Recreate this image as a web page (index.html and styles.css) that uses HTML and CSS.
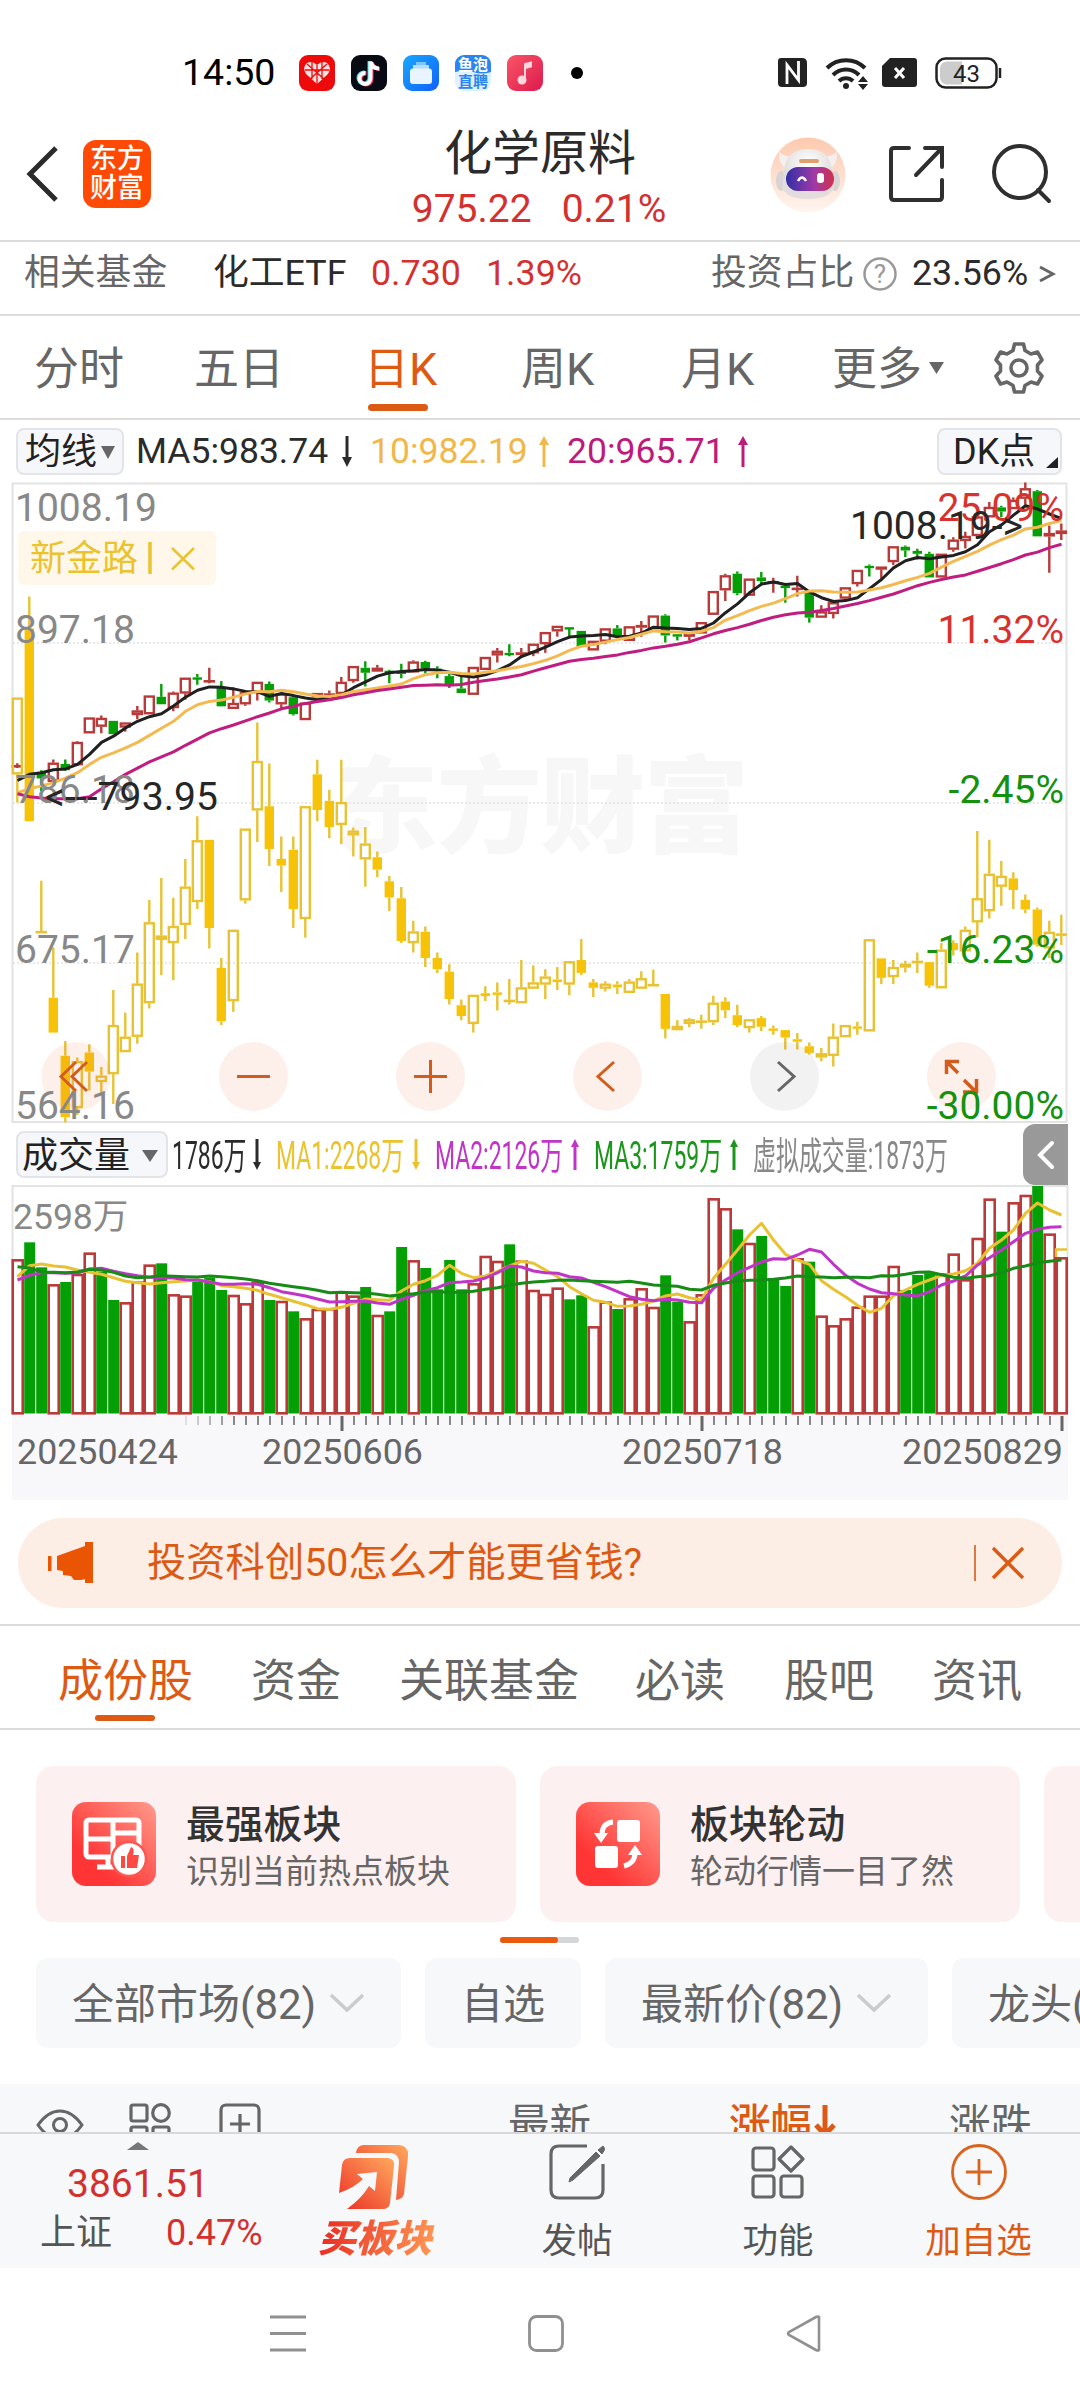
FILE: index.html
```html
<!DOCTYPE html>
<html lang="zh-CN">
<head>
<meta charset="utf-8">
<title>化学原料</title>
<link rel="stylesheet" href="styles.css">
</head>
<body>
<div class="status">
  <span class="clock">14:50</span>
  <div class="apps">
    <svg viewBox="0 0 36 36"><rect width="36" height="36" rx="9" fill="#ee0a0a"/><path d="M18 29 L7 19 Q3 12 8 8 Q13 5 18 10 Q23 5 28 8 Q33 12 29 19Z" fill="#ffe3e0"/><path d="M18 10V29M8 9L25 24M28 9L11 24M6 15H30M13 7V24M23 7V24" stroke="#ee0a0a" stroke-width="1.3"/></svg>
    <svg viewBox="0 0 36 36"><rect width="36" height="36" rx="9" fill="#090b14"/><g fill="none" stroke-width="4"><path d="M18.5 6V23a5.500 5.500 0 1 1-5-5.500M19 7q1.500 6 8 6" stroke="#25e6e0"/><path d="M20.500 7V24a5.500 5.500 0 1 1-5-5.500M21 8q1.500 6 8 6" stroke="#f7305a"/><path d="M19.500 6.500V23.500a5.500 5.500 0 1 1-5-5.500M20 7.500q1.500 6 8 6" stroke="#fff"/></g></svg>
    <svg viewBox="0 0 36 36"><defs><linearGradient id="blue" x2="1" y2="1"><stop stop-color="#18a8ff"/><stop offset="1" stop-color="#1260fa"/></linearGradient></defs><rect width="36" height="36" rx="9" fill="url(#blue)"/><path d="M13 7h10v3H13z" fill="#7fc6ff"/><path d="M10 10h16v4H10z" fill="#b5dcff"/><rect x="7" y="13.500" width="22" height="15.500" rx="3" fill="#e8f4ff"/></svg>
    <svg viewBox="0 0 36 36"><rect width="36" height="36" rx="9" fill="#dff0ff"/><path d="M0 17V9a9 9 0 0 1 9-9h18a9 9 0 0 1 9 9v8q-9 3-18 0-9-2-18 0z" fill="#2a85f0"/><text x="18" y="15" class="app-text" fill="#fff">鱼泡</text><text x="18" y="32" class="app-text" fill="#2a85f0">直聘</text></svg>
    <svg viewBox="0 0 36 36"><defs><linearGradient id="pink" x2="1" y2="1"><stop stop-color="#fa5568"/><stop offset="1" stop-color="#dc1a4e"/></linearGradient></defs><rect width="36" height="36" rx="9" fill="url(#pink)"/><path d="M18 25V9l6-1.500v4L18 13" fill="#ffd6dc" stroke="#ffd6dc" stroke-width="2"/><circle cx="15" cy="25" r="4.500" fill="#ffd6dc"/></svg>
  </div>
  <i class="dot"></i>
  <div class="signals">
    <svg width="32" height="32" viewBox="0 0 32 32"><path d="M4 1h21q5 0 5 5v20q0 4-4 4H5q-4 0-4-4V4q0-3 3-3z" fill="#222"/><path d="M10 27V8L21.500 23V4" fill="none" stroke="#fff" stroke-width="2.800"/></svg>
    <svg width="46" height="36" viewBox="0 0 46 36"><g fill="none" stroke="#222" stroke-width="4"><path d="M2 13a27 27 0 0 1 38 0M8 20a18 18 0 0 1 26 0M14 26a10 10 0 0 1 14 0"/></g><circle cx="21" cy="31" r="3" fill="#222"/><path d="M33 27l5-6 5 6zM33 29l5 6 5-6z" fill="#222"/></svg>
    <svg width="36" height="32" viewBox="0 0 36 32"><path d="M8 1h24q3 0 3 3v23q0 3-3 3H3q-3 0-3-3V9z" fill="#222"/><path d="M13 11l9 10M22 11l-9 10" stroke="#fff" stroke-width="3"/></svg>
    <svg width="68" height="32" viewBox="0 0 68 32"><rect x="1.500" y="1.500" width="60" height="29" rx="9" fill="#fff" stroke="#222" stroke-width="2.500"/><path d="M12 4.500h15v23H12a7 7 0 0 1-7-7v-9a7 7 0 0 1 7-7z" fill="#ccc"/><path d="M65 11v10" stroke="#222" stroke-width="2.500"/><text x="31.500" y="24.500" class="battery">43</text></svg>
  </div>
</div>

<header class="header">
  <svg class="back" viewBox="0 0 34 58"><path d="M30 3L4 29L30 55" fill="none" stroke="#2b2b2b" stroke-width="5"/></svg>
  <div class="logo"><span>东方</span><span>财富</span></div>
  <div class="title"><h1>化学原料</h1><p><span>975.22</span><span>0.21%</span></p></div>
  <svg class="robot" viewBox="0 0 76 76"><defs><linearGradient id="halo" x2="0" y2="1"><stop stop-color="#fdc9ae"/><stop offset="1" stop-color="#fff5f0"/></linearGradient><linearGradient id="visor"><stop stop-color="#322fa8"/><stop offset=".6" stop-color="#a13aa5"/><stop offset="1" stop-color="#d0304a"/></linearGradient><radialGradient id="shell" cy=".3"><stop stop-color="#fff"/><stop offset="1" stop-color="#e2dcdc"/></radialGradient></defs><circle cx="38" cy="38" r="37.500" fill="url(#halo)"/><path d="M9 15q8 6 16 4l-8 14q-9-6-8-18zM67 15q-8 6-16 4l8 14q9-6 8-18z" fill="#f5efee"/><ellipse cx="11" cy="44" rx="5" ry="10" fill="#d8d3d4"/><ellipse cx="65" cy="44" rx="5" ry="10" fill="#d8d3d4"/><path d="M38 12q21 0 24 20l2 18q-4 12-26 12T12 50l2-18q3-20 24-20z" fill="url(#shell)"/><rect x="29" y="22" width="20" height="4" rx="2" fill="#dfa06c"/><rect x="16" y="30" width="48" height="24" rx="12" fill="url(#visor)"/><path d="M28 44q4-7 8 0" fill="none" stroke="#fff" stroke-width="2.500"/><rect x="47" y="36" width="7" height="10" rx="3" fill="#fff"/></svg>
  <svg class="share" viewBox="0 0 58 60"><path d="M21 4H6Q3 4 3 7V53Q3 56 6 56H51Q54 56 54 53V36M37 4H54V23M53 5L28 31" fill="none" stroke="#2f2f2f" stroke-width="4" stroke-linecap="round"/></svg>
  <svg class="search" viewBox="0 0 62 62"><circle cx="29" cy="29" r="26" fill="none" stroke="#2f2f2f" stroke-width="4"/><path d="M47 47L58 58" stroke="#2f2f2f" stroke-width="4" stroke-linecap="round"/></svg>
</header>

<div class="fund">
  <span class="muted">相关基金</span><span>化工ETF</span><span class="red">0.730</span><span class="red">1.39%</span><span class="muted">投资占比</span>
  <svg width="36" height="36" viewBox="0 0 36 36"><circle cx="18" cy="18" r="15.500" fill="none" stroke="#999" stroke-width="2.500"/><text x="18" y="27" class="help">?</text></svg>
  <span>23.56%</span><svg width="18" height="20" viewBox="0 0 18 20"><path d="M2 3L15 10L2 17" fill="none" stroke="#666" stroke-width="3"/></svg>
</div>

<nav class="periods">
  <span>分时</span><span>五日</span><span class="active">日K</span><span>周K</span><span>月K</span><span>更多</span>
  <svg width="18" height="14" viewBox="0 0 18 14"><path d="M1 1H16L8.500 13Z" fill="#666"/></svg>
  <svg class="gear" width="54" height="54" viewBox="0 0 54 54"><g fill="none" stroke="#666" stroke-width="3.600" stroke-linejoin="round"><path d="M22.500 3h9l1.500 6.500 6 3.500 6.500-2 4.500 8-4.500 5v6l4.500 5-4.500 8-6.500-2-6 3.500-1.500 6.500h-9L21 44.500 15 41l-6.500 2L4 35l4.500-5v-6L4 19l4.500-8 6.500 2 6-3.500z"/><circle cx="27" cy="27" r="8"/></g></svg>
</nav>

<div class="averages">
  <div class="pill">均线<svg width="14" height="13" viewBox="0 0 14 13"><path d="M0 0H14L7 13Z" fill="#666"/></svg></div>
  <span>MA5:983.74</span><svg class="down" viewBox="0 0 10 31"><path d="M5 0V26"/><path class="head" d="M0 21h10L5 31z"/></svg>
  <span class="amber">10:982.19</span><svg class="up amber" viewBox="0 0 10 31"><path d="M5 5V31"/><path class="head" d="M0 9h10L5 0z"/></svg>
  <span class="magenta">20:965.71</span><svg class="up magenta" viewBox="0 0 10 31"><path d="M5 5V31"/><path class="head" d="M0 9h10L5 0z"/></svg>
  <div class="pill dk">DK点<svg width="12" height="11" viewBox="0 0 12 11"><path d="M12 0V11H0Z" fill="#222"/></svg></div>
</div>

<div class="price">
  <svg class="plot" viewBox="0 482 1080 642">
    <text class="watermark" x="541" y="844" textLength="416">东方财富</text>
    <g class="grid"><path d="M13 643H1067M13 803H1067M13 963H1067"/></g>
    <rect class="frame" x="12.500" y="483.500" width="1054" height="638.500"/>
    <g id="candles"></g>
    <g class="controls">
      <circle cx="76" cy="1076.500" r="34.500"/><circle cx="253.500" cy="1076.500" r="34.500"/><circle cx="430.500" cy="1076.500" r="34.500"/><circle cx="607.500" cy="1076.500" r="34.500"/><circle class="off" cx="784.500" cy="1076.500" r="34.500"/><circle cx="961.500" cy="1076.500" r="34.500"/>
      <path d="M76 1062L61 1076.500L76 1091M87 1062L72 1076.500L87 1091M237 1076.500H270M414 1076.500H447M430.500 1060V1093M614 1062L598 1076.500L614 1091"/>
      <path class="off" d="M778 1062L794 1076.500L778 1091"/>
      <path class="expand" d="M959 1061.500H946.500V1074M947 1062L958 1073M964 1080L976 1092M963 1092H976.500V1079"/>
    </g>
    <g class="tag"><rect x="18" y="531" width="198" height="54" rx="6"/><text x="30" y="571">新金路</text><path d="M150 542V574" class="bar"/><path d="M172 548L194 569.500M194 548L172 569.500"/></g>
    <g class="scale"><text x="15" y="520.500">1008.19</text><text x="15" y="642.500">897.18</text><text x="15" y="803">786.18</text><text x="15" y="963">675.17</text><text x="15" y="1118.500">564.16</text></g>
    <g class="scale right"><text class="rise" x="1064" y="520.500">25.09%</text><text class="rise" x="1064" y="642.500">11.32%</text><text x="1064" y="803">-2.45%</text><text x="1064" y="963">-16.23%</text><text x="1064" y="1118.500">-30.00%</text></g>
    <g class="scale extreme"><text x="45" y="810" textLength="173">&lt;---793.95</text><text x="850" y="538.500">1008.19-&gt;</text></g>
  </svg>
</div>

<div class="volume-head">
  <div class="pill">成交量<svg width="16" height="12" viewBox="0 0 16 12"><path d="M0 0H16L8 12Z" fill="#666"/></svg></div>
  <span>1786万</span><svg class="down" viewBox="0 0 10 31"><path d="M5 0V26"/><path class="head" d="M1 23h8L5 31z"/></svg>
  <span class="gold">MA1:2268万</span><svg class="down gold" viewBox="0 0 10 31"><path d="M5 0V26"/><path class="head" d="M1 23h8L5 31z"/></svg>
  <span class="purple">MA2:2126万</span><svg class="up purple" viewBox="0 0 10 31"><path d="M5 5V31"/><path class="head" d="M1 8h8L5 0z"/></svg>
  <span class="green">MA3:1759万</span><svg class="up green" viewBox="0 0 10 31"><path d="M5 5V31"/><path class="head" d="M1 8h8L5 0z"/></svg>
  <span class="grey">虚拟成交量:1873万</span>
  <div class="drawer"><svg width="18" height="30" viewBox="0 0 18 30"><path d="M15 3L3 15L15 27" fill="none" stroke="#fff" stroke-width="4" stroke-linecap="round"/></svg></div>
</div>

<div class="volume">
  <svg class="plot" viewBox="0 1185 1080 315">
    <rect x="12" y="1414" width="1056" height="86" fill="#f8f8fa"/>
    <path class="frame" d="M12.500 1414V1186H1067.500V1414"/>
    <g id="bars"></g>
    <text class="vol-max" x="13" y="1228.500">2598万</text>
    <g class="dates"><text x="97.500" y="1463.500">20250424</text><text x="342.500" y="1463.500">20250606</text><text x="702.500" y="1463.500">20250718</text><text x="982.500" y="1463.500">20250829</text></g>
  </svg>
</div>

<div class="promo-wrap">
  <div class="promo">
    <svg width="46" height="42" viewBox="0 0 46 42"><path d="M0 14h3.500v15H0zM9 14L37 4V0h8v41H37V37L33 38 26 38 23 34 15 33V29L9 28z" fill="#ea5504"/></svg>
    <span>投资科创50怎么才能更省钱?</span>
    <i></i>
    <svg width="34" height="34" viewBox="0 0 34 34"><path d="M2 2L32 32M32 2L2 32" stroke="#dd5a14" stroke-width="3.500"/></svg>
  </div>
</div>

<nav class="sections"><span class="active">成份股</span><span>资金</span><span>关联基金</span><span>必读</span><span>股吧</span><span>资讯</span></nav>

<div class="cards">
  <div class="card">
    <svg viewBox="0 0 84 84"><defs><linearGradient id="red" x1="1" y1="0" x2="0" y2="1"><stop stop-color="#ff9b8c"/><stop offset=".75" stop-color="#ff3434"/></linearGradient></defs><rect width="84" height="84" rx="14" fill="url(#red)"/><rect x="14" y="18" width="53" height="37" rx="3" fill="none" stroke="#fff" stroke-width="5"/><path d="M41 17V56M14 37H41M41 31H68M25 65H42M36 56V66" fill="none" stroke="#fff" stroke-width="5"/><circle cx="57" cy="57" r="17" fill="#fff" stroke="#ff5550" stroke-width="2.500"/><path d="M49 54h4v12h-4zM55 54l4-9q4 1 2 8h6l-2 13H55z" fill="#ff4a44"/></svg>
    <div><b>最强板块</b><span>识别当前热点板块</span></div>
  </div>
  <div class="card">
    <svg viewBox="0 0 84 84"><rect width="84" height="84" rx="14" fill="url(#red)"/><rect x="41" y="18" width="23" height="22" rx="3" fill="#fff"/><rect x="19" y="44" width="23" height="22" rx="3" fill="#fff"/><path d="M37 20Q26 21 26 33M48 64Q59 61 59 51" fill="none" stroke="#fff" stroke-width="5"/><path d="M18 31H32L25 41ZM52 53H66L59 43Z" fill="#fff"/></svg>
    <div><b>板块轮动</b><span>轮动行情一目了然</span></div>
  </div>
  <div class="card"></div>
</div>
<div class="pager"><i></i></div>
<div class="chips">
  <div>全部市场(82)<svg viewBox="0 0 36 20"><path d="M2 2L18 17L34 2"/></svg></div>
  <div>自选</div>
  <div>最新价(82)<svg viewBox="0 0 36 20"><path d="M2 2L18 17L34 2"/></svg></div>
  <div>龙头(82)</div>
</div>

<div class="table-head">
  <svg width="48" height="34" viewBox="0 0 48 34"><g fill="none" stroke="#666" stroke-width="3"><path d="M2 17Q12 3 24 3T46 17Q36 31 24 31T2 17Z"/><circle cx="24" cy="17" r="6.500"/></g></svg>
  <svg width="42" height="42" viewBox="0 0 42 42"><g fill="none" stroke="#666" stroke-width="3.200"><rect x="2" y="2" width="16" height="16" rx="2"/><circle cx="32" cy="10" r="8.300"/><rect x="2" y="24" width="16" height="16" rx="2"/><rect x="24" y="24" width="16" height="16" rx="2"/></g></svg>
  <svg width="42" height="42" viewBox="0 0 42 42"><g fill="none" stroke="#666" stroke-width="3.200"><rect x="2" y="2" width="38" height="38" rx="5"/><path d="M21 11V31M11 21H31"/></g></svg>
  <span>最新<svg class="sort" viewBox="0 0 10 10"><path d="M10 0V10H0Z"/></svg></span><span class="sorted">涨幅<svg width="22" height="36" viewBox="0 0 22 36"><path d="M11 0V30M2 20L11 30L20 20" fill="none" stroke="#dd5a14" stroke-width="5"/></svg></span><span>涨跌<svg class="sort" viewBox="0 0 10 10"><path d="M10 0V10H0Z"/></svg></span>
</div>

<footer class="bottom">
  <div class="index"><svg width="22" height="8" viewBox="0 0 22 8"><path d="M0 8H22L11 0Z" fill="#777"/></svg><strong>3861.51</strong><p><span>上证</span><span class="red">0.47%</span></p></div>
  <div class="item buy"><svg width="74" height="68" viewBox="0 0 74 68"><defs><linearGradient id="fire" x1="1" y1="0" x2="0" y2="1"><stop stop-color="#ffa95e"/><stop offset="1" stop-color="#ec2f25"/></linearGradient></defs><path d="M18 9Q19 1 26 1H61Q71 2 70 12L66 50Q65 55 58 56L61 18Q61 11 54 9Z" fill="url(#fire)"/><path d="M12 14H50Q57 15 56 22L52 59Q51 65 45 65H9Q24 54 31 42L37 47 39 28 19 30 25 35Q16 44 1 49L4 21Q5 14 12 14Z" fill="url(#fire)"/></svg><span>买板块</span></div>
  <div class="item"><svg width="56" height="56" viewBox="0 0 56 56"><path d="M38 2H10Q2 2 2 10V46Q2 54 10 54H46Q54 54 54 46V20" fill="none" stroke="#666" stroke-width="3.200"/><path d="M49 6L54 2 56 5 53 10zM47 8L51 12 24 36 20 38 21 34z" fill="#666" stroke="#666"/></svg><span>发帖</span></div>
  <div class="item"><svg width="56" height="56" viewBox="0 0 56 56"><g fill="none" stroke="#666" stroke-width="3.200"><rect x="3" y="4" width="21" height="22" rx="3"/><path d="M41 3L53 15L41 27L29 15Z" stroke-linejoin="round"/><rect x="3" y="32" width="21" height="21" rx="3"/><rect x="31" y="32" width="21" height="21" rx="3"/></g></svg><span>功能</span></div>
  <div class="item add"><svg width="56" height="56" viewBox="0 0 56 56"><circle cx="28" cy="28" r="26.500" fill="none" stroke="#d9641f" stroke-width="2.800"/><path d="M28 15V41M15 28H41" stroke="#d9641f" stroke-width="2.800"/></svg><span>加自选</span></div>
</footer>

<div class="system-nav">
  <svg width="36" height="38" viewBox="0 0 36 38"><path d="M0 2H36M0 18.500H36M0 35H36" stroke="#909090" stroke-width="3"/></svg>
  <svg width="36" height="38" viewBox="0 0 36 38"><rect x="1.500" y="1.500" width="33" height="34" rx="7" fill="none" stroke="#909090" stroke-width="2.800"/></svg>
  <svg width="36" height="38" viewBox="0 0 36 38"><path d="M33 2V35Q32 36 30 35L3 20Q1 18.500 3 17L30 2Q32 1 33 2Z" fill="none" stroke="#909090" stroke-width="2.600"/></svg>
</div>
<script src="chart.js"></script>
</body>
</html>
```
FILE: styles.css
```css
* { box-sizing: border-box; margin: 0; padding: 0; }
body { width: 1080px; height: 2400px; overflow: hidden; background: #fff; color: #2b2b2b; font: 36px/1 Roboto, "Noto Sans CJK SC", sans-serif; white-space: nowrap; }
svg { display: block; flex: none; }
.red { color: #d3312f; }
.muted { color: #666; }

.status { display: flex; align-items: center; height: 100px; padding: 46px 0 0 182px; color: #000; }
.clock { width: 117px; font-size: 37.500px; }
.apps { display: flex; gap: 16px; }
.apps svg { width: 36px; height: 36px; }
.app-text { font-size: 15px; font-weight: 700; text-anchor: middle; }
.dot { width: 12px; height: 12px; margin-left: 28px; border-radius: 50%; background: #000; }
.signals { display: grid; grid-template-columns: 48px 57px 53px 68px; align-items: center; margin-left: 194px; }
.battery { font-size: 24px; text-anchor: middle; fill: #222; }

.header { display: grid; grid-template-columns: 57px 187px 540px 117px 102px 62px; align-items: start; height: 142px; padding-left: 26px; border-bottom: 2px solid #dcdcdc; }
.back { width: 34px; height: 58px; margin-top: 45px; }
.logo { display: flex; flex-direction: column; align-items: center; justify-content: center; width: 68px; height: 68px; margin-top: 40px; border-radius: 13px; background: #ff4a05; color: #fff; font-size: 27px; font-weight: 500; line-height: 29px; }
.title { width: 540px; text-align: center; padding-top: 29px; }
.title h1 { font-size: 48px; font-weight: 400; line-height: 50px; }
.title p { display: flex; justify-content: center; gap: 30px; margin-left: -2px; color: #d3312f; font-size: 39px; line-height: 60px; }
.robot { width: 76px; height: 76px; margin: 37px 0 0 -40px; }
.share { width: 58px; height: 60px; margin: 44px 0 0 -39px; }
.search { width: 62px; height: 62px; margin: 43px 0 0 -38px; }

.fund { display: grid; grid-template-columns: 189px 158px 115px 225px 151px 50px 126px 20px; align-items: center; height: 74px; padding: 0 0 9px 24px; border-bottom: 2px solid #dcdcdc; font-size: 35.800px; }
.help { font-size: 26px; text-anchor: middle; fill: #999; }

.periods { display: grid; grid-template-columns: 160px 170px 157px 160px 151px 96px 64px 54px; align-items: center; height: 104px; padding-left: 34px; border-bottom: 2px solid #dcdcdc; color: #666; font-size: 45px; }
.periods span { height: 104px; line-height: 108px; position: relative; }
.periods .active::after { content: ""; position: absolute; left: 4px; top: 88px; width: 60px; height: 7px; border-radius: 4px; background: #dd5a14; }
.active { color: #dd5a14; }

.averages { display: grid; grid-template-columns: 120px 206px 28px 169px 28px 171px 199px 125px; align-items: center; height: 62px; padding-left: 16px; }
.averages > span { padding-top: 2px; font-size: 35.500px; }
.pill { display: flex; align-items: center; gap: 4px; width: 108px; height: 47px; padding: 2px 0 0 7px; border: 2px solid #e2e4e8; border-radius: 8px; background: #f6f7fa; font-size: 36px; color: #222; }
.dk { width: 125px; padding-left: 14px; gap: 11px; }
.dk svg { margin-top: 20px; }
.down, .up { width: 10px; height: 31px; fill: none; stroke: currentColor; stroke-width: 3; }
.head { fill: currentColor; stroke: none; }
.amber { color: #f1b74b; }
.magenta { color: #bd1a7c; }
.gold { color: #eac32f; }
.purple { color: #c035c7; }
.green { color: #1b961b; }
.grey { color: #888; }

.plot { width: 1080px; height: 100%; }
.price { height: 642px; }
.watermark { font-size: 105px; font-weight: 900; text-anchor: middle; fill: #f7f7f7; }
.grid { stroke: #e2e2e2; stroke-width: 1.500; stroke-dasharray: 2 2; }
.frame { fill: none; stroke: #e3e3e3; stroke-width: 2; }
.controls circle { fill: #f0703c; fill-opacity: .11; }
.controls circle.off { fill: #888; fill-opacity: .11; }
.controls path { fill: none; stroke: #d35c1c; stroke-width: 3; }
.controls path.off { stroke: #666; }
.controls path.expand { stroke-width: 3.500; }
.tag rect { fill: #fff8ea; }
.tag text { font-size: 36px; fill: #eac32f; }
.tag path { fill: none; stroke: #eac32f; stroke-width: 2.500; }
.tag .bar { stroke-width: 3.500; }
.scale { font-size: 39px; fill: #888; }
.right { text-anchor: end; fill: #14910f; }
.rise { fill: #d8322f; }
.extreme { fill: #262626; }

.volume-head { display: grid; grid-template-columns: 156px 80px 24px 135px 24px 135px 24px 135px 24px 270px 45px; align-items: center; height: 61px; padding-left: 16px; font-size: 38px; }
.volume-head > span { width: 0; padding-top: 2px; transform: scaleX(.604); transform-origin: 0 50%; }
.volume-head .pill { width: 152px; padding-left: 4px; gap: 12px; }
.drawer { display: flex; align-items: center; justify-content: center; width: 45px; height: 61px; border-radius: 12px 0 0 12px; background: #999; }
.volume { height: 315px; }
.vol-max { font-size: 35.500px; fill: #888; }
.dates { font-size: 35.800px; fill: #666; text-anchor: middle; }

.promo-wrap { height: 126px; padding: 18px 18px 0; border-bottom: 2px solid #dcdcdc; }
.promo { display: grid; grid-template-columns: 99px 827px 17px 34px; align-items: center; height: 90px; padding-left: 30px; border-radius: 45px; background: #fceee5; color: #dd5a14; font-size: 39.300px; }
.promo span { padding-top: 2px; }
.promo i { width: 2px; height: 36px; background: #dd7a44; }

.sections { display: grid; grid-template-columns: 193px 148px 236px 149px 148px 100px; height: 104px; padding-left: 58px; border-bottom: 2px solid #dcdcdc; color: #666; font-size: 45px; line-height: 111px; }
.sections .active { position: relative; }
.sections .active::after { content: ""; position: absolute; left: 37px; top: 89px; width: 60px; height: 6px; border-radius: 3px; background: #dd5a14; }

.cards { display: grid; grid-template-columns: 480px 480px 480px; gap: 24px; overflow: hidden; padding: 36px 0 0 36px; }
.card { display: flex; gap: 30px; align-items: center; height: 156px; padding-left: 36px; border-radius: 18px; background: #fdf0f0; }
.card > svg { width: 84px; height: 84px; }
.card b { display: block; margin-top: 5px; font-size: 38.800px; font-weight: 500; line-height: 50px; color: #333; }
.card span { display: block; font-size: 33px; line-height: 44px; color: #666; }
.pager { width: 79px; height: 6px; margin: 15px 0 0 500px; border-radius: 3px; background: #d4d7da; }
.pager i { display: block; width: 58px; height: 6px; border-radius: 3px; background: #ea5a0e; }
.chips { display: grid; grid-template-columns: 365px 156px 323px 365px; gap: 24px; overflow: hidden; padding: 15px 0 0 36px; color: #666; font-size: 42px; }
.chips div { display: flex; align-items: center; gap: 13px; height: 90px; padding: 3px 0 0 36px; border-radius: 12px; background: #f7f8fa; }
.chips svg { width: 36px; height: 20px; margin-top: -4px; fill: none; stroke: #ccc; stroke-width: 3.500; }

.table-head { display: grid; grid-template-columns: 93px 90px 289px 221px 220px 110px; height: 48px; margin-top: 36px; padding: 19px 0 0 36px; overflow: hidden; background: #f7f8fa; color: #666; font-size: 41.500px; }
.table-head svg:first-child { margin-top: 5px; }
.table-head span { display: flex; gap: 2px; padding-top: 1px; }
.table-head .sorted { color: #dd5a14; font-weight: 500; }
.table-head .sorted svg { margin-top: 1px; }
.table-head .sort { width: 10px; height: 10px; margin: 25px 0 0 13px; fill: #666; }
.table-head .sort path { transform: translateY(1px); }
.table-head .sort { align-self: flex-start; }
.table-head span .sort { margin-top: 26px; }

.bottom { display: grid; grid-template-columns: 276px 201px 200px 202px 201px; height: 136px; border-top: 2px solid #d9d9d9; background: #f7f8fa; }
.index svg { margin: 8px 0 0 127px; }
.index strong { display: block; margin-top: 9px; padding-left: 67px; color: #d3312f; font-size: 39px; font-weight: 400; line-height: 50px; }
.index p { display: grid; grid-template-columns: 126px 110px; padding-left: 40px; color: #555; font-size: 36px; line-height: 48px; }
.item { display: flex; flex-direction: column; align-items: center; padding: 10px 0 0; color: #555; font-size: 35.500px; }
.item svg { margin-bottom: 21px; }
.item span { line-height: 40px; }
.item.add { padding-right: 2px; color: #dd5a14; }
.item.buy { padding-right: 3px; }
.buy svg { margin-bottom: 7px; }
.buy span { padding: 0 4px; background: linear-gradient(100deg, #e8251f, #ff9a55); -webkit-background-clip: text; background-clip: text; color: transparent; font-size: 38px; font-weight: 900; font-style: italic; }
.table-head span:not(.sorted) .sort { margin-top: 27px; height: 10px; clip-path: inset(0); }
.table-head span:not(.sorted) .sort path { transform: translateY(8px); }

.system-nav { display: grid; grid-template-columns: 258px 258px 36px; padding: 47px 0 0 270px; }
```
FILE: chart.js
```js
// Each plot has 88 trading days, 12px apart.
const X = i => 17 + 12 * i;
const priceY = v => 480 + v / 2.4123;
const volY = v => 1120 + v / 3;
const RED = '#b93a38', GREEN = '#049f04', GOLD = '#f7c308', LINE = '#e9c233';

// body top, body bottom, wick top, wick bottom; leading "f" marks a falling day
const stock = `688 692 683 695,,f705 720 700 750,682 728 674 732,f685 700 674 702,632 688 630 690,573 611,574 595 568 611,f581 613,585 597 585 607,556 567 545 577,520 565,f523 541 492 541,513 550 510 558,477 515 477 530,f476 480 468 494,483 487 453 490,f501 546 485 546,538 552 500 552,512 541 512 545,487 513 487 532,f492 532 486 537,515 541 515 550,f524 565 520 568,537 579,514 524,515 518 508 524,487 516 475 516,449 485 449 489,f453 465 437 498,453 462 446 462,f460 464 458 490,f462 468 443 478,438 464 435 464,f439 455 436 467,f455 460 449 478,f473 493 465 502,f503 514 475 514,451 518,427 458,412 423 405 440,f417 420 396 425,416 422 405 427,395 418 395 425,367 396 367 417,352 365 352 378,f355 359 355 377,f364 402,388 411,358 390 358 396,f358 378 350 378,353 388,350 356 340 378,327 360,f327 375 324 392,f372 377 372 387,372 378 372 387,343 370,268 325,230 266 226 292,f226 273 221 278,238 279,f235 244 222 250,244 247 236 272,f255 260 255 296,260 263 231 281,f268 332 268 344,317 332 302 332,295 323 295 334,259 286 259 292,217 251 217 257,f207 212 204 233,209 216 209 238,160 198 160 205,f161 170 158 186,f171 178 166 192,f178 235 173 235,178 235,144 168 138 173,135 147 125 165,88 135,65 90 53 90,f66 76 62 90,48 70 42 70,20 45 6 60,f27 136 24 136,128 136 110 224,122 130 105 145`;
const peer = `525 710 525 778,f358 823 281 823,1088 1090 967 1092,f1249 1333 1128 1333,f1389 1537 1353 1550,1402 1515 1393 1532,f1381 1427 1361 1473,1437 1452 1416 1478,1315 1433 1230 1505,1343 1380 1285 1380,1215 1343 1140 1360,1067 1262 1013 1275,1099 1109 960 1194,1076 1117 1008 1207,981 1073 914 1107,869 1018 811 1035,f868 1081 868 1130,f1177 1306 1153 1315,1085 1257 1085 1283,841 1014 841 1022,678 797 585 873,f787 890 684 931,f914 930 860 994,f892 1035 860 1081,787 1059 787 1104,f710 796 675 823,f774 837 747 864,777 832 675 878,846 857 838 908,877 915 837 981,f910 940 896 958,f968 1007 955 1040,f1009 1112 982 1117,1089 1117 1063 1140,f1090 1153 1077 1175,f1153 1180 1140 1189,f1186 1252 1168 1265,f1267 1293 1253 1303,1242 1312 1242 1333,f1238 1245 1221 1257,f1236 1242 1212 1280,1254 1256 1204 1265,1224 1262 1158 1262,1212 1227 1171 1227,1198 1217 1180 1252,f1205 1211 1175 1230,1161 1217 1161 1243,f1158 1189 1107 1194,f1212 1225 1204 1247,1215 1227 1209 1234,f1217 1224 1209 1240,1210 1237 1204 1237,1202 1227 1185 1227,1216 1218 1181 1218,f1240 1324 1240 1347,1317 1327 1303 1327,1301 1312 1298 1320,1304 1306 1290 1324,1261 1308 1244 1315,f1258 1279 1248 1298,f1291 1315 1266 1320,1301 1322 1301 1333,f1298 1319 1293 1329,f1323 1328 1316 1338,f1327 1345 1327 1374,f1349 1355 1334 1374,f1366 1382 1357 1386,1383 1393 1370 1402,1343 1389 1311 1415,1315 1344,f1318 1323 1307 1338,1108 1330,f1154 1201 1154 1216,1175 1199 1158 1216,1167 1176 1160 1188,1160 1161 1140 1189,f1163 1220 1163 1225,1133 1226 1117 1226,f1117 1134 1110 1147,1085 1137 1077 1137,1009 1067 847 1103,950 1040 868 1058,955 981 919 1027,f961 989 946 1035,f1013 1036 1000 1045,f1036 1121 1031 1126,1090 1130 1063 1153,1094 1099 1049 1122`;
const volumes = `418 f367 f442 493 f486 462 398 f455 f540 547 485 434 f430 523 527 f478 f473 f510 525 550 485 f540 543 f574 595 567 565 515 527 f501 585 f574 f381 421 f444 f508 f420 f508 490 408 423 f373 422 510 522 503 f538 f526 619 545 f567 535 505 561 f466 f545 604 523 235 265 f328 369 f348 f476 f498 415 f425 587 616 595 560 527 527 438 f510 f465 f460 460 401 478 354 236 f335 247 225 f198 341 412`;

const ma = {
  '#202020': '725 710 706 699 697 686 662 633 618 598 582 571 564 545 524 507 499 500 504 510 511 522 515 520 526 530 524 518 501 487 473 465 462 460 457 458 464 472 475 470 460 446 426 415 403 390 379 376 375 373 378 377 369 355 357 358 361 358 345 320 299 272 251 246 252 250 270 284 293 291 284 262 240 212 195 187 190 186 182 173 156 125 108 85 62 70 82 93',
  '#f3ba52': '754 745 738 730 719 706 686 669 658 646 633 616 599 582 558 542 534 531 524 516 510 511 507 511 516 521 522 518 510 506 502 497 492 479 470 465 464 467 468 464 460 455 450 443 435 424 411 401 397 391 385 380 372 364 366 367 369 365 356 338 327 315 305 297 286 274 268 267 270 271 270 265 260 252 243 235 225 210 196 184 172 157 144 133 118 114 105 98',
  '#c01d80': '757 764 767 769 769 769 764 745 728 710 695 680 668 656 640 625 610 600 591 581 571 562 552 546 539 534 530 525 518 513 508 504 500 496 495 494 495 493 488 484 480 475 470 461 453 445 437 433 430 426 422 416 411 405 401 396 390 381 371 363 356 348 339 331 325 321 319 315 310 304 298 291 283 275 265 255 247 240 234 229 220 211 202 192 181 174 163 155'
};
const volMa = {
  '#e9c233': '470 437 432 438 441 450 457 463 473 484 488 492 488 485 483 480 485 497 500 505 511 523 533 544 554 566 568 562 550 537 539 541 513 493 482 466 436 460 473 468 454 438 424 430 450 470 500 521 541 547 559 558 553 543 528 522 533 540 475 433 390 345 310 360 403 420 433 482 508 530 556 577 565 527 510 493 480 466 462 452 430 385 360 330 280 249 270 285',
  '#c035c7': '480 466 458 458 460 459 447 445 454 461 467 472 473 474 479 480 486 493 493 491 493 503 515 521 528 537 546 545 544 543 549 553 538 526 512 503 488 486 483 474 458 438 441 453 458 460 470 474 487 500 515 530 538 542 538 540 547 548 505 480 458 442 426 416 418 405 388 396 433 466 490 507 518 521 525 528 515 495 483 468 435 413 390 365 340 328 322 320',
  '#168c16': '440 444 456 457 458 456 448 450 457 468 473 471 467 469 470 471 468 470 473 477 482 490 495 500 505 511 518 517 518 519 523 528 524 521 517 514 518 516 514 508 503 496 490 486 484 481 480 482 484 485 487 484 489 495 497 499 508 510 496 489 483 481 480 478 474 468 470 471 473 472 472 473 467 468 463 457 456 464 472 475 470 467 458 445 438 428 424 420'
};

const lines = (set, y) => Object.entries(set).map(([c, s]) =>
  `<polyline fill="none" stroke="${c}" stroke-width="3" stroke-linejoin="round" points="${s.split(' ').map((v, i) => (X(i) + .5) + ',' + y(+v).toFixed(1)).join(' ')}"/>`).join('');

function candles(src, upColor, downColor, wickDown) {
  return src.split(',').map((row, i) => {
    if (!row) return '';
    const down = row[0] === 'f';
    const [t, b, h = t, l = b] = row.replace('f', '').split(' ').map(Number).map(priceY);
    const c = down ? downColor : upColor, x = X(i) + .3;
    const wick = `<path d="M${x} ${h}V${t}M${x} ${b}V${l}" stroke="${down ? wickDown : c}" stroke-width="2.4"/>`;
    if (down) return wick + `<rect x="${x - 4.7}" y="${t}" width="9.4" height="${Math.max(b - t, 2.4)}" fill="${c}"/>`;
    return wick + `<rect x="${x - 4.5}" y="${t + 1}" width="9" height="${Math.max(b - t - 2, .2)}" fill="none" stroke="${c}" stroke-width="2.4"/>`;
  }).join('');
}

document.getElementById('candles').innerHTML =
  candles(stock, RED, GREEN, GREEN) + candles(peer, LINE, GOLD, LINE) + lines(ma, priceY);

const bars = volumes.split(' ').map((v, i) => {
  const down = v[0] === 'f', y = volY(+v.replace('f', '')), x = X(i) + .7;
  return down
    ? `<rect x="${x - 5.5}" y="${y}" width="11" height="${1413.5 - y}" fill="${GREEN}"/>`
    : `<rect x="${x - 5}" y="${y + 1}" width="10" height="${1412.3 - y}" fill="#fff" stroke="${RED}" stroke-width="2.6"/>`;
}).join('');
const estimate = `<path d="M1056 1257V1249.500H1067" fill="none" stroke="${LINE}" stroke-width="2.500"/>`;

let ticks = '';
for (let i = 14; i < 88; i++) {
  const major = i === 27 || i === 57 || i === 87;
  ticks += `<path d="M${X(i) + 1} 1416V${major ? 1431 : 1425}" stroke="${major ? '#666' : '#888'}" stroke-width="${major ? 3 : 2}" opacity="${i < 18 ? (i - 13) * .2 : 1}"/>`;
}
document.getElementById('bars').innerHTML = bars + estimate + lines(volMa, volY) + ticks;
```
